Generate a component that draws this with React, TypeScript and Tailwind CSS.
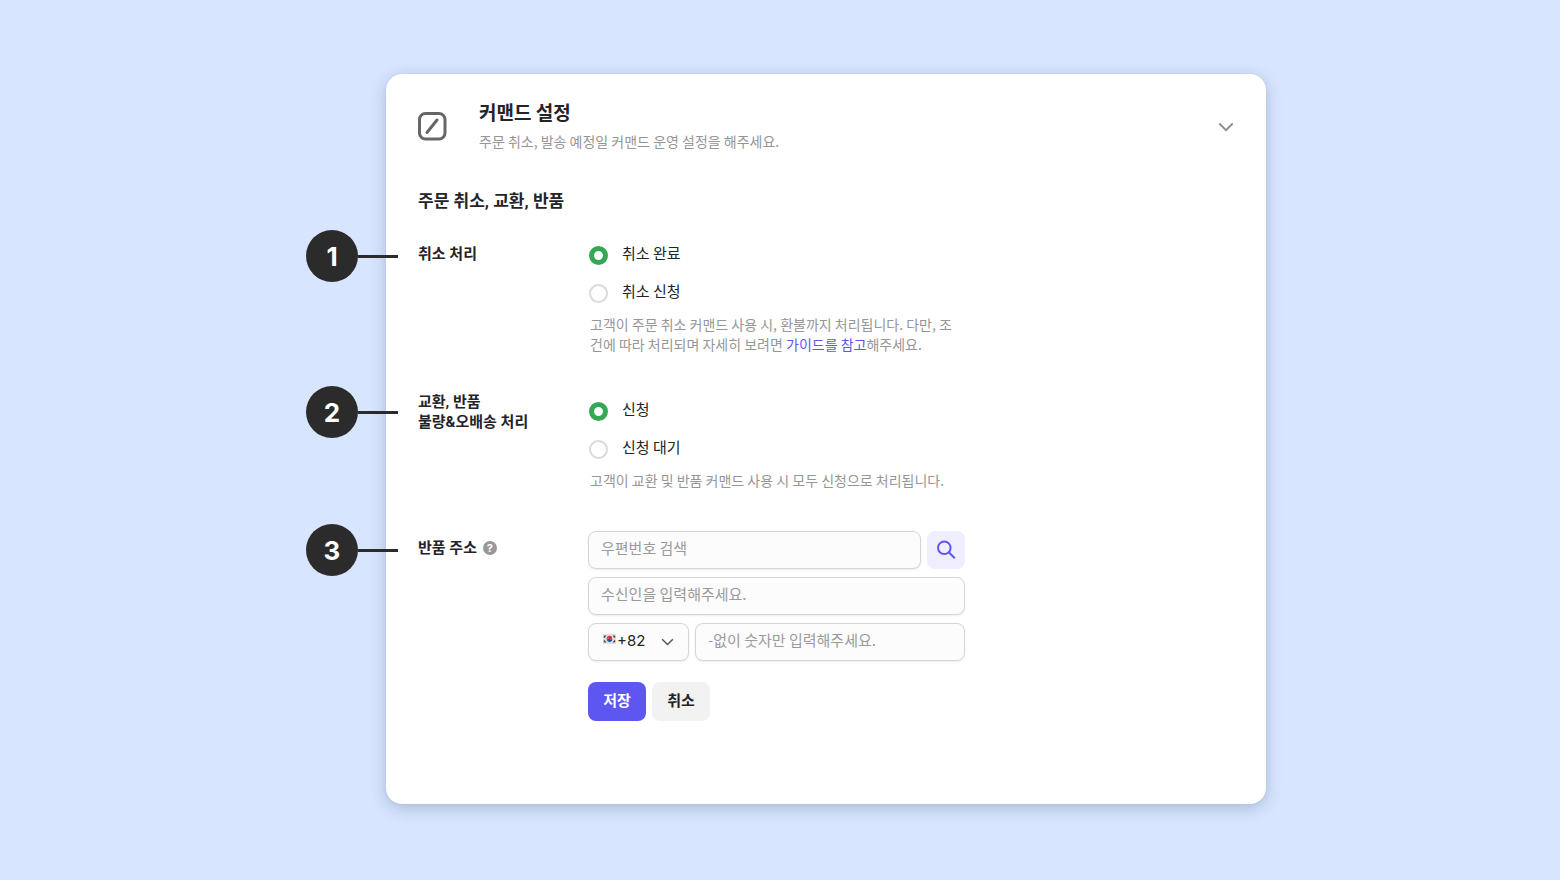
import { useState, type ReactNode } from 'react'

type Option = { value: string; label: string }

const cancelOptions: Option[] = [
  { value: 'done', label: '취소 완료' },
  { value: 'request', label: '취소 신청' },
]

const returnOptions: Option[] = [
  { value: 'request', label: '신청' },
  { value: 'pending', label: '신청 대기' },
]

const fieldClass =
  'h-[38px] min-w-0 rounded-lg border border-[#d6d6d6] bg-[#fcfcfc] px-3 pb-1.5 text-[15px] text-[#242428] placeholder-[#9a9a9a] shadow-[0_1px_2px_rgba(0,0,0,0.08)] outline-none focus:border-[#5e56f0]'

function StepMarker({ step }: { step: number }) {
  return (
    <div className="absolute -left-28 -top-1.5 flex items-center">
      <span className="flex size-[52px] items-center justify-center rounded-full bg-[#2b2b2b] pt-0.5 font-['Inter',sans-serif] text-[26px] font-bold leading-none text-white">
        {step}
      </span>
      <span className="h-[3px] w-10 bg-[#2b2b2b]" />
    </div>
  )
}

function SettingRow({ step, label, labelClass = 'pt-2', children }: {
  step: number
  label: ReactNode
  labelClass?: string
  children: ReactNode
}) {
  return (
    <div className="relative flex items-start">
      <StepMarker step={step} />
      <div className={`w-[170px] shrink-0 font-['Roboto','Noto_Sans_CJK_KR',sans-serif] text-[15px] font-bold leading-5 ${labelClass}`}>{label}</div>
      <div className="w-full max-w-[377px]">{children}</div>
    </div>
  )
}

function RadioList({ name, label, options }: { name: string; label: string; options: Option[] }) {
  const [selected, setSelected] = useState(options[0].value)

  return (
    <div role="radiogroup" aria-label={label}>
      {options.map((option) => (
        <label key={option.value} className="flex h-[38px] cursor-pointer items-center gap-3.5 pl-px text-[15px]">
          <input
            type="radio"
            name={name}
            value={option.value}
            checked={selected === option.value}
            onChange={() => setSelected(option.value)}
            className="size-[19px] shrink-0 cursor-pointer appearance-none rounded-full border-2 border-[#dadada] bg-white checked:border-[5px] checked:border-[#34a853]"
          />
          <span className="pb-1 leading-5">{option.label}</span>
        </label>
      ))}
    </div>
  )
}

function HelpText({ children }: { children: ReactNode }) {
  return <p className="mt-0.5 pl-0.5 pr-2 text-[14px] leading-5 text-[#969696]">{children}</p>
}

function CommandIcon() {
  return (
    <svg className="size-[30px] shrink-0" viewBox="0 0 30 30" fill="none" stroke="#666" strokeWidth="3" strokeLinecap="round">
      <rect x="1.5" y="1.5" width="25.5" height="25.5" rx="6" />
      <path d="M9 20.500 19 8" />
    </svg>
  )
}

function ChevronIcon({ className }: { className?: string }) {
  return (
    <svg className={className} viewBox="0 0 16 10" fill="none" stroke="currentColor" strokeWidth="1.8">
      <path d="M1.3 1.5 8 8.2l6.7-6.7" />
    </svg>
  )
}

function KoreaFlag() {
  return (
    <svg className="pointer-events-none absolute left-[15px] top-[11px] h-[10px] w-[13px]" viewBox="0 0 26 20">
      <rect width="26" height="20" rx="1" fill="#dedede" />
      <path d="M7.500 10a5.500 5.500 0 0 1 11-1.500Q15.500 12 13 10T7.500 10Z" fill="#d8303f" />
      <path d="M18.500 9.500a5.500 5.500 0 0 1-11 1.500Q10.500 8.500 13 10.200T18.500 9.500Z" fill="#1b56a5" />
      <path d="m2 7 3-4M21 3l3 4M2 13l3 4M21 17l3-4" stroke="#444" strokeWidth="2.600" />
    </svg>
  )
}

export default function App() {
  const [open, setOpen] = useState(true)

  return (
    <div className="flex min-h-screen items-start justify-center bg-[#d8e5ff] pb-[76px] pl-3 pt-[74px] font-['Noto_Sans_CJK_KR',sans-serif] text-[#242428]">
      <main className="w-full max-w-[960px] pl-20">
        <section className="rounded-2xl bg-white px-8 pb-[83px] pt-6 shadow-[0_4px_16px_rgba(20,60,80,0.24),0_0_2px_rgba(20,60,80,0.1)]">
          <header className="flex items-center">
            <CommandIcon />
            <div className="ml-[31px] flex-1 pb-[5px]">
              <h1 className="text-[19px] font-bold leading-7">커맨드 설정</h1>
              <p className="mt-[5px] text-[14px] leading-5 text-[#969696]">주문 취소, 발송 예정일 커맨드 운영 설정을 해주세요.</p>
            </div>
            <button type="button" aria-label="커맨드 설정 접기" aria-expanded={open} onClick={() => setOpen(!open)} className="text-[#8c8c8c]">
              <ChevronIcon className="h-[10px] w-4" />
            </button>
          </header>

          {open && (
            <form onSubmit={(e) => e.preventDefault()}>
              <h2 className="mb-[23px] mt-[33px] font-['Roboto','Noto_Sans_CJK_KR',sans-serif] text-[17px] font-bold leading-6">주문 취소, 교환, 반품</h2>

              <SettingRow step={1} label="취소 처리">
                <RadioList name="cancel" label="취소 처리" options={cancelOptions} />
                <HelpText>
                  고객이 주문 취소 커맨드 사용 시, 환불까지 처리됩니다. 다만, 조건에 따라 처리되며 자세히 보려면{' '}
                  <a href="#guide" className="text-[#5e56f0]">가이드를 참고</a>해주세요.
                </HelpText>
              </SettingRow>

              <div className="mt-[38px]">
                <SettingRow step={2} labelClass="pt-0" label={<>교환, 반품<br />불량&amp;오배송 처리</>}>
                  <RadioList name="return" label="교환, 반품 불량&오배송 처리" options={returnOptions} />
                  <HelpText>고객이 교환 및 반품 커맨드 사용 시 모두 신청으로 처리됩니다.</HelpText>
                </SettingRow>
              </div>

              <div className="mt-10">
                <SettingRow
                  step={3}
                  label={
                    <span className="flex items-center gap-1.5">
                      <label htmlFor="zipcode">반품 주소</label>
                      <button type="button" aria-label="반품 주소 도움말" className="flex size-[14px] items-center justify-center rounded-full bg-[#999] font-['Inter',sans-serif] text-[11px] font-bold leading-none text-white">
                        ?
                      </button>
                    </span>
                  }
                >
                  <div className="flex flex-col gap-2 pt-px">
                    <div className="flex gap-1.5">
                      <input id="zipcode" type="text" placeholder="우편번호 검색" className={`${fieldClass} flex-1`} />
                      <button type="button" aria-label="우편번호 검색" className="flex size-[38px] shrink-0 items-center justify-center rounded-lg bg-[#efeefe] text-[#5e56f0]">
                        <svg className="size-[20px]" viewBox="0 0 20 20" fill="none" stroke="currentColor" strokeWidth="2">
                          <circle cx="8.3" cy="7.800" r="6.300" />
                          <path d="m12.800 12.300 6 6" />
                        </svg>
                      </button>
                    </div>
                    <input type="text" aria-label="수신인" placeholder="수신인을 입력해주세요." className={`${fieldClass} w-full`} />
                    <div className="flex gap-1.5">
                      <div className="relative w-[101px] shrink-0">
                        <select aria-label="국가 번호" className="h-[38px] w-full appearance-none rounded-lg border border-[#d6d6d6] bg-[#fcfcfc] pb-0.5 pl-[28px] font-['Inter',sans-serif] text-[15px] shadow-[0_1px_2px_rgba(0,0,0,0.08)] outline-none">
                          <option>+82</option>
                        </select>
                        <KoreaFlag />
                        <ChevronIcon className="pointer-events-none absolute right-[15px] top-[15px] h-2 w-[13px] text-[#555]" />
                      </div>
                      <input type="tel" aria-label="전화번호" placeholder="-없이 숫자만 입력해주세요." className={`${fieldClass} flex-1`} />
                    </div>
                  </div>
                  <div className="mt-[21px] flex gap-1.5">
                    <button type="submit" className="h-[39px] w-[58px] rounded-lg bg-[#5e56f0] pb-0.5 text-[15px] font-bold text-white">
                      저장
                    </button>
                    <button type="button" className="h-[39px] w-[58px] rounded-lg bg-[#f2f2f2] pb-0.5 text-[15px] font-bold">
                      취소
                    </button>
                  </div>
                </SettingRow>
              </div>
            </form>
          )}
        </section>
      </main>
    </div>
  )
}
